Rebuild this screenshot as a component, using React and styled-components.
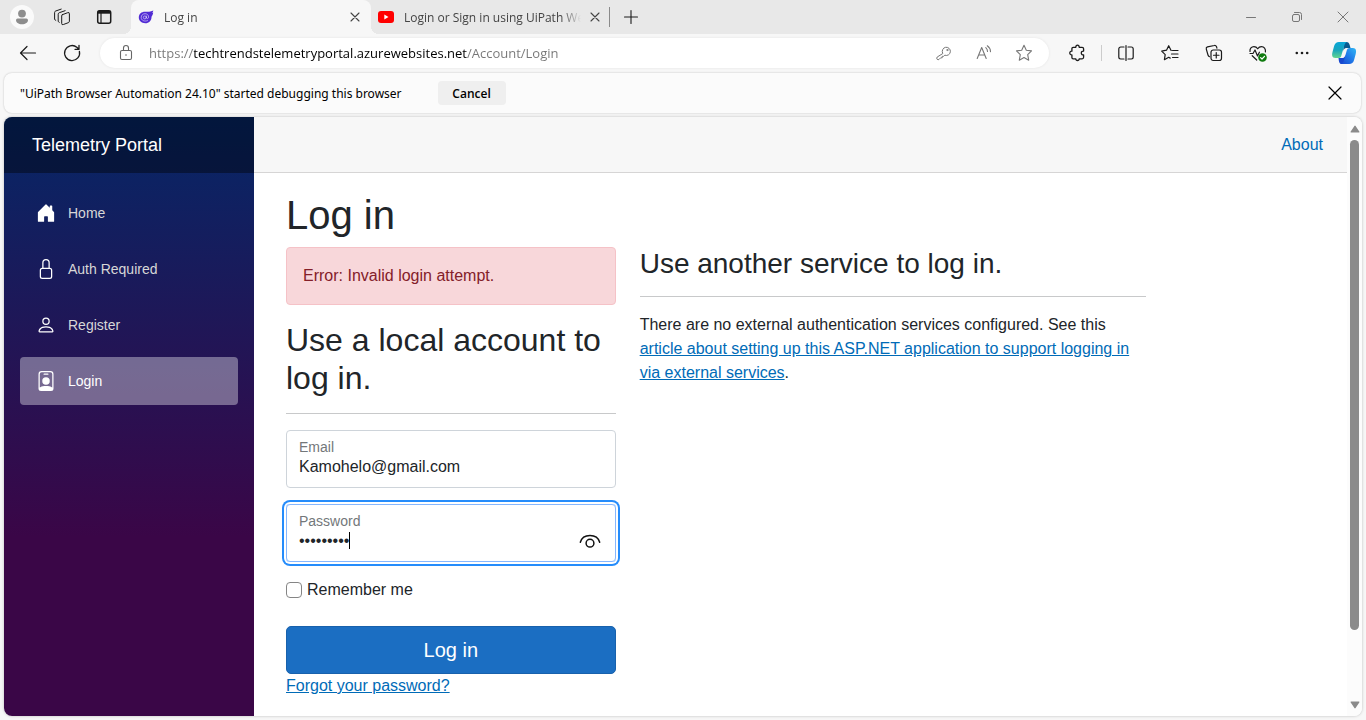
import React from "react";
import styled, { createGlobalStyle, css } from "styled-components";
import { BsHouseDoorFill, BsLock, BsPerson, BsPersonBadge } from "react-icons/bs";

const chromeFont = `"Segoe UI", "Open Sans", "Noto Sans", sans-serif`;
const pageFont = `"Helvetica Neue", Helvetica, Arial, "Liberation Sans", sans-serif`;

const GlobalStyle = createGlobalStyle`
  *, *::before, *::after { box-sizing: border-box; }
  body { margin: 0; background: #f7f7f7; }
  button, input { font: inherit; color: inherit; margin: 0; }
`;

/* ---------- Browser chrome ---------- */

const Browser = styled.div`
  display: flex;
  flex-direction: column;
  height: 100vh;
  background: #f7f7f7;
  font-family: ${chromeFont};
  font-size: 12px;
  color: #1b1b1b;
`;

const PlainButton = styled.button`
  display: inline-flex;
  align-items: center;
  justify-content: center;
  padding: 0;
  border: 0;
  background: none;
  flex: none;
`;

const TabStrip = styled.header`
  display: flex;
  align-items: stretch;
  height: 34px;
  flex: none;
  background: #e8e8e8;
`;

const StripButton = styled(PlainButton)`
  width: ${(p) => p.$width || 42}px;
  color: ${(p) => p.$color || "#1b1b1b"};
`;

const Avatar = styled.span`
  display: flex;
  align-items: center;
  justify-content: center;
  width: 24px;
  height: 24px;
  border-radius: 50%;
  background: #fafafa;
`;

const StripTools = styled.div`
  display: flex;
  padding: 0 6px 0 1px;
`;

const Tab = styled.div`
  position: relative;
  display: flex;
  align-items: center;
  width: 240px;
  padding: 0 8px 0 7px;
  color: #444;
  ${(p) =>
    p.$active &&
    css`
      background: #f7f7f7;
      border-radius: 8px 8px 0 0;
      &::before,
      &::after {
        content: "";
        position: absolute;
        bottom: 0;
        width: 8px;
        height: 8px;
      }
      &::before {
        right: 100%;
        background: radial-gradient(circle at 0 0, transparent 8px, #f7f7f7 8px);
      }
      &::after {
        left: 100%;
        background: radial-gradient(circle at 100% 0, transparent 8px, #f7f7f7 8px);
      }
    `}
`;

const TabTitle = styled.span`
  flex: 1;
  min-width: 0;
  margin: 0 6px 0 10px;
  overflow: hidden;
  white-space: nowrap;
  mask-image: linear-gradient(90deg, #000 calc(100% - 20px), transparent);
`;

const TabClose = styled(PlainButton)`
  width: 16px;
  height: 16px;
`;

const TabDivider = styled.span`
  width: 1px;
  height: 20px;
  align-self: center;
  margin-left: -2px;
  background: #8a8a8a;
`;

const WindowControls = styled.div`
  display: flex;
  margin-left: auto;
`;

const Toolbar = styled.div`
  display: flex;
  align-items: center;
  height: 38px;
  flex: none;
  padding: 0 2px 0 6px;
`;

const ToolButton = styled(PlainButton)`
  width: ${(p) => p.$width || 44}px;
  height: 30px;
  color: ${(p) => p.$color || "#1b1b1b"};
`;

const ToolDivider = styled.span`
  width: 1px;
  height: 16px;
  margin: 0 2px;
  background: #ccc;
`;

const AddressBar = styled.div`
  display: flex;
  align-items: center;
  flex: 1;
  height: 30px;
  margin: 0 6px;
  padding: 0 5px 0 3px;
  border-radius: 15px;
  background: #fff;
  box-shadow: 0 0 3px rgba(0, 0, 0, 0.08);
`;

const AddressInput = styled.input`
  flex: 1;
  min-width: 0;
  height: 24px;
  padding: 0;
  border: 0;
  outline: 0;
  font-size: 13px;
  background: linear-gradient(90deg, #767676 45px, #000 45px, #000 318px, #767676 318px);
  background-clip: text;
  -webkit-text-fill-color: transparent;
`;

const InfoBar = styled.div`
  display: flex;
  align-items: center;
  gap: 36px;
  height: 40px;
  flex: none;
  margin: 1px 5px 4px 4px;
  padding: 0 18px 0 16px;
  border-radius: 8px;
  background: #fbfbfb;
  box-shadow: 0 0 2px rgba(0, 0, 0, 0.24);
  font-family: "Segoe UI", "Noto Sans", sans-serif;
  color: #000;
`;

const CancelButton = styled(PlainButton)`
  width: 68px;
  height: 24px;
  border-radius: 4px;
  background: #efefef;
  font-family: ${chromeFont};
  font-weight: 600;
`;

const InfoClose = styled(PlainButton)`
  margin-left: auto;
`;

/* ---------- Web page ---------- */

const Viewport = styled.div`
  display: flex;
  flex: 1;
  min-height: 0;
  margin: 0 4px 4px;
  border-radius: 8px;
  overflow: hidden;
  background: #fff;
  box-shadow: 0 0 3px rgba(0, 0, 0, 0.24);
  font-family: ${pageFont};
  font-size: 16px;
  line-height: 24px;
  color: #212529;
`;

const Sidebar = styled.aside`
  flex: none;
  width: 250px;
  background: linear-gradient(180deg, rgb(5, 39, 103) 0%, #3a0647 70%);
`;

const Brand = styled.a`
  display: flex;
  align-items: center;
  height: 56px;
  padding: 0 28px;
  background: rgba(0, 0, 0, 0.4);
  color: #fff;
  font-size: 18px;
  text-decoration: none;
`;

const Nav = styled.nav`
  display: flex;
  flex-direction: column;
  gap: 8px;
  padding: 16px;
`;

const NavItem = styled.a`
  display: flex;
  align-items: center;
  gap: 12px;
  height: 48px;
  padding: 0 16px;
  border-radius: 4px;
  font-size: 14px;
  text-decoration: none;
  color: ${(p) => (p.$active ? "#fff" : "#d7d7d7")};
  background: ${(p) => (p.$active ? "rgba(255, 255, 255, 0.37)" : "none")};
  svg {
    color: #fff;
  }
`;

const Main = styled.main`
  flex: 1;
  min-width: 0;
  overflow: hidden;
`;

const TopRow = styled.div`
  display: flex;
  align-items: center;
  justify-content: flex-end;
  height: 56px;
  padding: 0 24px 0 32px;
  background: #f7f7f7;
  border-bottom: 1px solid #d6d5d5;
`;

const Link = styled.a`
  color: #006bb7;
  text-decoration: ${(p) => (p.$plain ? "none" : "underline")};
`;

const Article = styled.article`
  padding: 18px 24px 0 32px;
`;

const Title = styled.h1`
  margin: 0 0 8px;
  font-size: 40px;
  line-height: 48px;
  font-weight: 500;
`;

const Columns = styled.div`
  display: grid;
  grid-template-columns: repeat(12, 1fr);
  gap: 24px;
`;

const Column = styled.section`
  grid-column: span ${(p) => p.$span};
`;

const Heading = styled.h2`
  margin: 0;
  font-size: 32px;
  line-height: 38px;
  font-weight: 500;
`;

const SubHeading = styled.h3`
  margin: 0;
  font-size: 28px;
  line-height: 33px;
  font-weight: 500;
`;

const Rule = styled.hr`
  margin: 16px 0;
  border: 0;
  border-top: 1px solid #c8c9ca;
`;

const Paragraph = styled.p`
  margin: 0;
`;

const Alert = styled.div`
  margin-bottom: 16px;
  padding: 16px;
  border: 1px solid #f5c2c7;
  border-radius: 4px;
  background: #f8d7da;
  color: #842029;
`;

const Field = styled.div`
  position: relative;
  display: flex;
  flex-direction: column;
  height: 58px;
  margin-bottom: 16px;
  padding: 8px 12px;
  border: 1px solid ${(p) => (p.$focused ? "#86b7fe" : "#ced4da")};
  border-radius: 4px;
  box-shadow: ${(p) => (p.$focused ? "0 0 0 2px #fff, 0 0 0 4px #258cfb" : "none")};
`;

const FieldLabel = styled.label`
  font-size: 14px;
  line-height: 16px;
  color: #73777a;
`;

const FieldInput = styled.input`
  width: 100%;
  height: 24px;
  padding: 0;
  border: 0;
  outline: 0;
  background: none;
`;

const Caret = styled.span`
  position: absolute;
  left: 62px;
  top: 27px;
  width: 1px;
  height: 17px;
  background: #000;
`;

const RevealButton = styled(PlainButton)`
  position: absolute;
  right: 14px;
  top: 25px;
  color: #111;
`;

const CheckLabel = styled.label`
  display: flex;
  align-items: center;
  gap: 5px;
  margin-bottom: 24px;
`;

const CheckBox = styled.input`
  appearance: none;
  width: 16px;
  height: 16px;
  border: 1px solid #858585;
  border-radius: 4px;
  background: #fff;
`;

const SubmitButton = styled.button`
  display: block;
  width: 100%;
  height: 48px;
  border: 1px solid #1861ac;
  border-radius: 5px;
  background: #1b6ec2;
  color: #fff;
  font-size: 20px;
`;

const ScrollTrack = styled.div`
  display: flex;
  flex-direction: column;
  align-items: center;
  flex: none;
  width: 15px;
  padding: 8px 0 7px;
  background: #fcfcfc;
`;

const ScrollLane = styled.div`
  flex: 1;
  margin: 7px 0 11px;
`;

const ScrollThumb = styled.div`
  width: 9px;
  height: 89%;
  border-radius: 5px;
  background: #8b8b8b;
`;

/* ---------- Icons ---------- */

const Icon = ({ size = 20, w = 1.1, children }) => (
  <svg
    width={size}
    height={size}
    viewBox={`0 0 ${size} ${size}`}
    fill="none"
    stroke="currentColor"
    strokeWidth={w}
    strokeLinecap="round"
    strokeLinejoin="round"
    aria-hidden="true"
  >
    {children}
  </svg>
);

const CrossIcon = ({ size, inset, w }) => (
  <Icon size={size} w={w}>
    <path d={`M${inset} ${inset} L${size - inset} ${size - inset} M${size - inset} ${inset} L${inset} ${size - inset}`} />
  </Icon>
);

const PersonGlyph = () => (
  <svg width="14" height="16" viewBox="0 0 14 16" fill="#8d8d8d" aria-hidden="true">
    <circle cx="7" cy="4.6" r="3.9" />
    <path d="M2.6 9.6h8.8A1.6 1.6 0 0 1 13 11.200c0 2.200-2.400 4-6 4s-6-1.800-6-4a1.600 1.600 0 0 1 1.600-1.600z" />
  </svg>
);

const WorkspacesIcon = () => (
  <Icon w={1}>
    <path d="M9.300 7.700 14.700 5.700a1.200 1.200 0 0 1 1.700 1.100v7.400a1.600 1.600 0 0 1-1.100 1.500l-4.900 1.800a1.200 1.200 0 0 1-1.700-1.100V8.700a1 1 0 0 1 .6-1z" />
    <path d="M6.300 15.300 5.200 14.500V7.200a1.600 1.600 0 0 1 1.100-1.500l5.800-2M2.800 13.300 1.600 12.500V5.500A1.600 1.600 0 0 1 2.700 4l5.500-1.900" />
  </Icon>
);

const TabActionsIcon = () => (
  <Icon w={1.5}>
    <rect x="3.700" y="3.700" width="13" height="12.600" rx="2" />
    <path d="M3.700 5.200h13" strokeWidth="3" strokeLinecap="butt" />
    <path d="M7 6v10" strokeWidth="1.200" />
  </Icon>
);

const BlazorIcon = () => (
  <svg width="16" height="16" viewBox="0 0 18 16" aria-hidden="true">
    <path
      fill="#512bd4"
      d="M17.300.6c-.3 1.200-.7 2-1.300 2.700.4-.1.700-.2 1.100-.4-.2 2-.9 3.500-1.900 4.700.1 4.400-2.900 7.400-7 7.400C4 15 .9 12.300.9 8.600.9 4.600 4.100 2.200 7.700 2.200c3.600 0 6-.3 9.600-1.600z"
    />
    <path
      fill="none"
      stroke="#d9ccfa"
      strokeWidth="0.800"
      strokeLinecap="round"
      d="M10.600 12.100c-3.400 1.400-7-.3-7-3.600 0-2.500 2-4.200 4.300-4.200s4 1.600 4 3.500c0 1.300-.6 2-1.300 2s-1-.5-1-1.200V7M9.400 8.500a1.700 1.700 0 1 1-3.400 0 1.700 1.700 0 0 1 3.400 0z"
    />
  </svg>
);

const YouTubeIcon = () => (
  <svg width="16" height="12" viewBox="0 0 16 12" aria-hidden="true">
    <rect width="16" height="12" rx="3" fill="#f00" />
    <path d="M6.300 3.500v5L10.500 6z" fill="#fff" />
  </svg>
);

const PlusIcon = () => (
  <Icon>
    <path d="M10 3.500v13M3.500 10h13" />
  </Icon>
);

const MinimizeIcon = () => (
  <Icon size={12} w={1}>
    <path d="M1.500 6.500h9" />
  </Icon>
);

const RestoreIcon = () => (
  <Icon size={12} w={1}>
    <rect x="1.500" y="3.500" width="7" height="7" rx="1.500" />
    <path d="M3.500 1.500h5a2 2 0 0 1 2 2v5" />
  </Icon>
);

const BackIcon = () => (
  <Icon w={1.200}>
    <path d="M17.500 10h-15M9 3.500 2.500 10 9 16.500" />
  </Icon>
);

const ReloadIcon = () => (
  <Icon w={1.300}>
    <path d="M17.400 8.300A7.500 7.500 0 1 1 14.800 4.200L17 6.200M17 2.300v4h-4" />
  </Icon>
);

const PadlockIcon = () => (
  <Icon>
    <rect x="4.500" y="7.500" width="11" height="9" rx="1.500" />
    <path d="M7.500 7.500V5a2.500 2.500 0 0 1 5 0v2.500" />
    <circle cx="10" cy="12" r="0.800" fill="currentColor" stroke="none" />
  </Icon>
);

const KeyIcon = () => (
  <Icon w={1}>
    <path d="M8.600 10.200a4.100 4.100 0 1 1 2.200 2l-1.100 1.100H8.200v1.500H6.700l-1.600 1.600a1.500 1.500 0 0 1-2.100-2.100z" />
    <circle cx="13.300" cy="7" r="0.600" />
  </Icon>
);

const ReadAloudIcon = () => (
  <Icon w={1.100}>
    <path d="M3.200 15.500 7.700 4.500 12.200 15.500M4.700 12h6" />
    <path d="M11.800 4.600a5 5 0 0 1 1.700 3.800M13.300 2.800a7.500 7.500 0 0 1 3.200 5.800" />
  </Icon>
);

const StarIcon = () => (
  <Icon w={1.100}>
    <path d="M10 2.300 12.300 7.200 17.500 7.900 13.700 11.700 14.700 17.200 10 14.600 5.300 17.200 6.300 11.700 2.500 7.900 7.700 7.200z" />
  </Icon>
);

const PuzzleIcon = () => (
  <Icon w={1.300}>
    <path d="M6.200 4.300h2.600c-.1-1.400.7-2.100 1.700-2.100s1.800.7 1.700 2.100h2.900a1.500 1.500 0 0 1 1.500 1.500v2.300c-1.500-.1-2.300.7-2.300 1.900s.8 2 2.300 1.900v2.400a1.500 1.500 0 0 1-1.500 1.500h-2.900c.1 1.200-.7 1.700-1.700 1.700s-1.800-.5-1.700-1.700H6.200a1.300 1.300 0 0 1-1.300-1.300v-2.600c-1.400.1-2.100-.8-2.100-1.900s.7-2 2.100-1.900V5.600a1.300 1.300 0 0 1 1.300-1.300z" />
  </Icon>
);

const SplitIcon = () => (
  <Icon w={1.200}>
    <path d="M8 4H4.700A1.900 1.900 0 0 0 2.800 5.900v8.200A1.900 1.900 0 0 0 4.700 16H8M12 4h3.300a1.900 1.900 0 0 1 1.900 1.900v8.200a1.900 1.900 0 0 1-1.900 1.900H12M10 2.500v15" />
  </Icon>
);

const FavoritesIcon = () => (
  <Icon w={1.200}>
    <path d="M11.300 7.500h-.2L8.700 2.700 6.500 7.200 1.700 8.100 5.200 11.600 4.400 16.700 8.700 14.300l1.500.8M12.500 7.500H18M11.500 11H18M12.500 14.500H18" />
  </Icon>
);

const CollectionsIcon = () => (
  <Icon w={1.200}>
    <rect x="7" y="7" width="10.500" height="10.500" rx="2.200" />
    <path d="M12.250 9.500v5.500M9.500 12.250H15M5.500 13.700A2.500 2.500 0 0 1 4 12L2.300 6.100A1.800 1.800 0 0 1 3.500 3.900L10.300 2.500a1.900 1.900 0 0 1 2.300 1.400l.3 1.300" />
  </Icon>
);

const EssentialsIcon = () => (
  <Icon w={1.200}>
    <path d="M2 8.500C1.600 5.500 3.600 3.600 5.900 3.600c1.500 0 2.900.8 3.800 2.200.9-1.400 2.300-2.200 3.800-2.200 2.500 0 4.400 2.100 3.900 5.300M4.200 12.700l4.500 4.300M2 10.500h3L7 7l2.500 6 1.900-3.800" />
    <circle cx="14.500" cy="14.500" r="4.300" fill="#0f7b0f" stroke="none" />
    <path d="M12.600 14.600 14 16l2.500-2.700" stroke="#fff" />
  </Icon>
);

const MoreIcon = () => (
  <Icon>
    <g fill="currentColor" stroke="none">
      <circle cx="4.800" cy="10" r="1.300" />
      <circle cx="10" cy="10" r="1.300" />
      <circle cx="15.200" cy="10" r="1.300" />
    </g>
  </Icon>
);

const CopilotIcon = () => (
  <svg width="26" height="24" viewBox="0 0 26 24" aria-hidden="true">
    <defs>
      <linearGradient id="copilotLeft" x1="0" y1="0" x2="0" y2="1">
        <stop offset="0" stopColor="#08a6d8" />
        <stop offset="0.500" stopColor="#18a5bd" />
        <stop offset="1" stopColor="#63d58f" />
      </linearGradient>
      <linearGradient id="copilotRight" x1="1" y1="0" x2="0" y2="1">
        <stop offset="0" stopColor="#31b8f4" />
        <stop offset="0.500" stopColor="#217be9" />
        <stop offset="1" stopColor="#1748cf" />
      </linearGradient>
    </defs>
    <path d="M12.500 1h3c1.800 0 2.600 1.200 3.200 3l.8 3h-4.200c-1.800 0-2.500 1.400-3 3z" fill="#075b91" />
    <path d="M7.500 17h4.200c1.600 0 2.200-1.400 2.700-3l1.600 6c-.7 2-1.700 3-3.500 3h-2c-1.800 0-2.500-1.300-3-6z" fill="#1748cf" />
    <path d="M8 1h8.200c-1.900.4-2.500 2.100-3.100 4.200L10.200 15c-.4 1.400-1.300 2-2.700 2H4.200C1.200 17 .6 14.200 1.500 11l1.700-6.200C4 2.300 5.500 1 8 1z" fill="url(#copilotLeft)" />
    <path d="M18.200 23H10c1.800-.4 2.500-2.100 3.100-4.200L15.900 9c.4-1.300 1.200-2 2.600-2H22c3 0 3.600 2.800 2.700 6L23 19.200C22.200 21.700 20.700 23 18.200 23z" fill="url(#copilotRight)" />
  </svg>
);

const EyeIcon = () => (
  <Icon size={22} w={1.500}>
    <path d="M1.300 12.300C2.500 8 6.300 5.400 11 5.400s8.500 2.600 9.700 6.900" />
    <circle cx="11" cy="13.200" r="3.900" />
  </Icon>
);

const Arrow = ({ down }) => (
  <svg width="10" height="8" viewBox="0 0 10 8" aria-hidden="true">
    <path
      d={down ? "M1.200 0.500h7.600a.6.6 0 0 1 .5 1L5.600 7a.7.7 0 0 1-1.200 0L.7 1.500a.6.6 0 0 1 .5-1z" : "M1.200 7.500h7.600a.6.6 0 0 0 .5-1L5.600 1a.7.7 0 0 0-1.200 0L.7 6.500a.6.6 0 0 0 .5 1z"}
      fill="#8b8b8b"
    />
  </svg>
);

/* ---------- Data ---------- */

const navItems = [
  { label: "Home", icon: BsHouseDoorFill },
  { label: "Auth Required", icon: BsLock },
  { label: "Register", icon: BsPerson },
  { label: "Login", icon: BsPersonBadge, active: true },
];

const addressActions = [
  { label: "Passwords", icon: KeyIcon },
  { label: "Read aloud", icon: ReadAloudIcon },
  { label: "Add to favorites", icon: StarIcon },
];

const toolbarActions = [
  { label: "Split screen", icon: SplitIcon },
  { label: "Favorites", icon: FavoritesIcon },
  { label: "Collections", icon: CollectionsIcon },
  { label: "Browser essentials", icon: EssentialsIcon },
  { label: "Settings and more", icon: MoreIcon },
];

/* ---------- Sections ---------- */

const BrowserTab = ({ title, icon, active }) => (
  <Tab $active={active}>
    {icon}
    <TabTitle>{title}</TabTitle>
    <TabClose type="button" aria-label="Close tab">
      <CrossIcon size={16} inset={4} w={1.100} />
    </TabClose>
  </Tab>
);

const Chrome = () => (
  <>
    <TabStrip>
      <StripTools>
        <StripButton type="button" aria-label="Profile">
          <Avatar>
            <PersonGlyph />
          </Avatar>
        </StripButton>
        <StripButton $width={40} type="button" aria-label="Workspaces">
          <WorkspacesIcon />
        </StripButton>
        <StripButton type="button" aria-label="Tab actions">
          <TabActionsIcon />
        </StripButton>
      </StripTools>
      <BrowserTab title="Log in" icon={<BlazorIcon />} active />
      <BrowserTab title="Login or Sign in using UiPath Web" icon={<YouTubeIcon />} />
      <TabDivider />
      <StripButton type="button" aria-label="New tab">
        <PlusIcon />
      </StripButton>
      <WindowControls>
        <StripButton $width={46} $color="#777" type="button" aria-label="Minimize">
          <MinimizeIcon />
        </StripButton>
        <StripButton $width={46} $color="#777" type="button" aria-label="Restore">
          <RestoreIcon />
        </StripButton>
        <StripButton $width={46} $color="#777" type="button" aria-label="Close">
          <CrossIcon size={12} inset={1} w={1} />
        </StripButton>
      </WindowControls>
    </TabStrip>
    <Toolbar>
      <ToolButton type="button" aria-label="Back">
        <BackIcon />
      </ToolButton>
      <ToolButton type="button" aria-label="Refresh">
        <ReloadIcon />
      </ToolButton>
      <AddressBar>
        <ToolButton $width={46} $color="#666" type="button" aria-label="View site information">
          <PadlockIcon />
        </ToolButton>
        <AddressInput
          type="text"
          aria-label="Address and search bar"
          defaultValue="https://techtrendstelemetryportal.azurewebsites.net/Account/Login"
        />
        {addressActions.map(({ label, icon: Glyph }) => (
          <ToolButton key={label} $width={40} $color="#777" type="button" aria-label={label}>
            <Glyph />
          </ToolButton>
        ))}
      </AddressBar>
      <ToolButton type="button" aria-label="Extensions">
        <PuzzleIcon />
      </ToolButton>
      <ToolDivider />
      {toolbarActions.map(({ label, icon: Glyph }) => (
        <ToolButton key={label} type="button" aria-label={label}>
          <Glyph />
        </ToolButton>
      ))}
      <ToolButton $width={40} type="button" aria-label="Copilot">
        <CopilotIcon />
      </ToolButton>
    </Toolbar>
    <InfoBar>
      <span>"UiPath Browser Automation 24.10" started debugging this browser</span>
      <CancelButton type="button">Cancel</CancelButton>
      <InfoClose type="button" aria-label="Dismiss">
        <CrossIcon size={16} inset={2} w={1.200} />
      </InfoClose>
    </InfoBar>
  </>
);

const LoginForm = () => (
  <form onSubmit={(e) => e.preventDefault()}>
    <Heading>Use a local account to log in.</Heading>
    <Rule />
    <Field>
      <FieldLabel htmlFor="email">Email</FieldLabel>
      <FieldInput id="email" type="email" defaultValue="Kamohelo@gmail.com" />
    </Field>
    <Field $focused>
      <FieldLabel htmlFor="password">Password</FieldLabel>
      <FieldInput id="password" type="password" defaultValue="Passw0rd!" />
      <Caret />
      <RevealButton type="button" aria-label="Show password">
        <EyeIcon />
      </RevealButton>
    </Field>
    <CheckLabel>
      <CheckBox type="checkbox" />
      Remember me
    </CheckLabel>
    <SubmitButton type="submit">Log in</SubmitButton>
    <Link href="#forgot">Forgot your password?</Link>
  </form>
);

const Page = () => (
  <Viewport>
    <Sidebar>
      <Brand href="#home">Telemetry Portal</Brand>
      <Nav>
        {navItems.map(({ label, icon: Glyph, active }) => (
          <NavItem key={label} href={`#${label}`} $active={active}>
            <Glyph size={20} aria-hidden="true" />
            {label}
          </NavItem>
        ))}
      </Nav>
    </Sidebar>
    <Main>
      <TopRow>
        <Link $plain href="#about">
          About
        </Link>
      </TopRow>
      <Article>
        <Title>Log in</Title>
        <Columns>
          <Column $span={4}>
            <Alert role="alert">Error: Invalid login attempt.</Alert>
            <LoginForm />
          </Column>
          <Column $span={6}>
            <SubHeading>Use another service to log in.</SubHeading>
            <Rule />
            <Paragraph>
              There are no external authentication services configured. See this{" "}
              <Link href="#article">
                article about setting up this ASP.NET application to support logging in via external services
              </Link>
              .
            </Paragraph>
          </Column>
        </Columns>
      </Article>
    </Main>
    <ScrollTrack aria-hidden="true">
      <Arrow />
      <ScrollLane>
        <ScrollThumb />
      </ScrollLane>
      <Arrow down />
    </ScrollTrack>
  </Viewport>
);

export default function App() {
  return (
    <Browser>
      <GlobalStyle />
      <Chrome />
      <Page />
    </Browser>
  );
}
